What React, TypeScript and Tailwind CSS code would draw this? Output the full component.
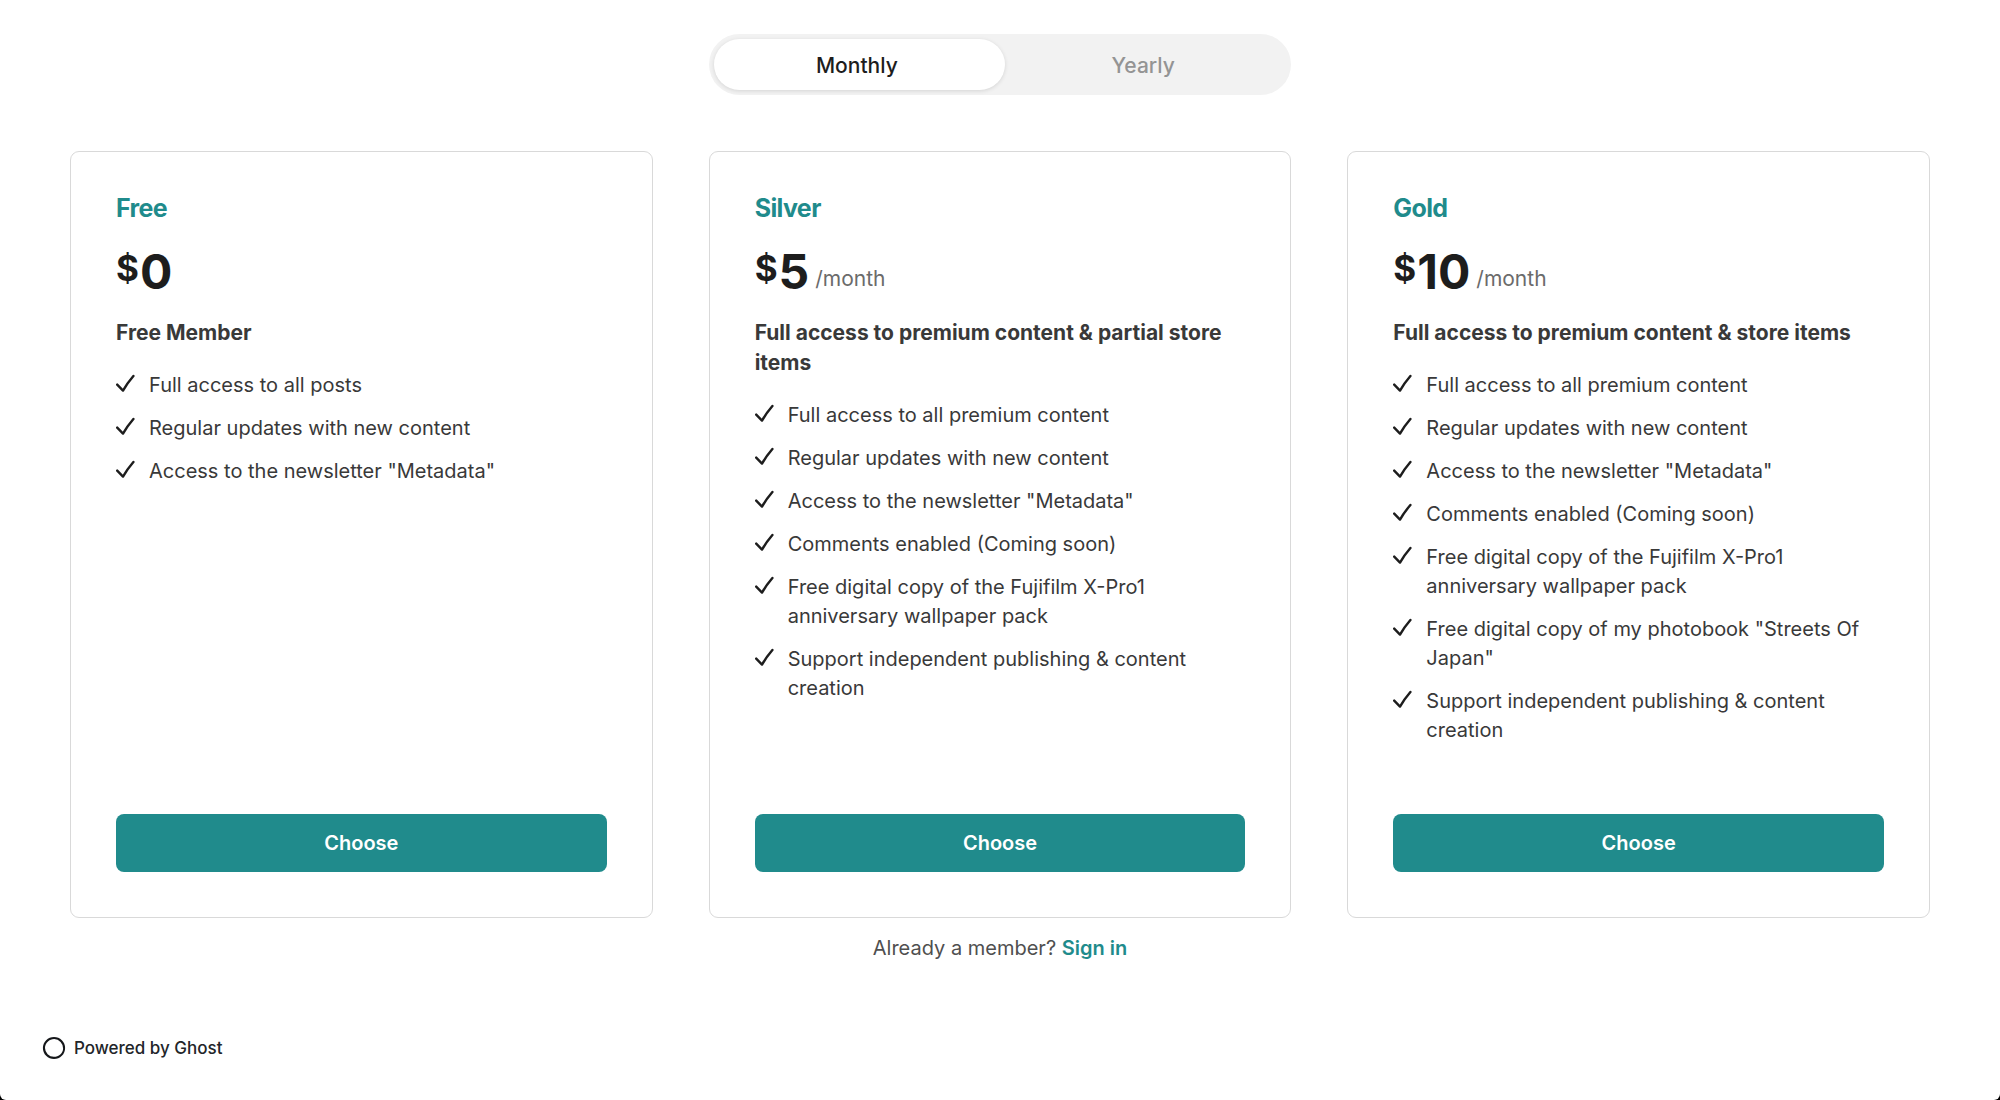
import { useState } from "react";

type Plan = {
  name: string;
  monthly: number;
  yearly: number;
  description: string;
  benefits: string[];
};

const plans: Plan[] = [
  {
    name: "Free",
    monthly: 0,
    yearly: 0,
    description: "Free Member",
    benefits: [
      "Full access to all posts",
      "Regular updates with new content",
      'Access to the newsletter "Metadata"',
    ],
  },
  {
    name: "Silver",
    monthly: 5,
    yearly: 50,
    description: "Full access to premium content & partial store items",
    benefits: [
      "Full access to all premium content",
      "Regular updates with new content",
      'Access to the newsletter "Metadata"',
      "Comments enabled (Coming soon)",
      "Free digital copy of the Fujifilm X-Pro1 anniversary wallpaper pack",
      "Support independent publishing & content creation",
    ],
  },
  {
    name: "Gold",
    monthly: 10,
    yearly: 100,
    description: "Full access to premium content & store items",
    benefits: [
      "Full access to all premium content",
      "Regular updates with new content",
      'Access to the newsletter "Metadata"',
      "Comments enabled (Coming soon)",
      "Free digital copy of the Fujifilm X-Pro1 anniversary wallpaper pack",
      'Free digital copy of my photobook "Streets Of Japan"',
      "Support independent publishing & content creation",
    ],
  },
];

function CheckIcon() {
  return (
    <svg
      viewBox="0 0 20 20"
      className="mt-[3px] size-5 shrink-0"
      fill="none"
      stroke="#1d1d1d"
      strokeWidth="2.4"
      strokeLinecap="round"
      strokeLinejoin="round"
      aria-hidden="true"
    >
      <path d="M1.2 10.6 L7 16.600 Q11 9.500 17.400 2" />
    </svg>
  );
}

function PlanCard({ plan, yearly }: { plan: Plan; yearly: boolean }) {
  const amount = yearly ? plan.yearly : plan.monthly;
  return (
    <section className="flex flex-col rounded-[9px] border border-[#d9d9d9] px-[45px] pt-10 pb-[45px]">
      <h2 className="text-[25px] leading-8 font-bold tracking-tight text-[#1f8b8c]">{plan.name}</h2>
      <div className="mt-6 flex items-start text-[#1d1d1d]">
        <span className="text-[35px] leading-10 font-bold">$</span>
        <span className="ml-px text-5xl leading-12 font-bold">{amount}</span>
        {amount > 0 && (
          <span className="ml-1.5 self-end text-[21px] leading-[34px] text-[#6b6b6b]">
            {yearly ? "/year" : "/month"}
          </span>
        )}
      </div>
      <p className="mt-[22px] text-[21px] leading-[30px] font-bold text-[#393939]">{plan.description}</p>
      <ul className="mt-[23px] flex flex-col gap-3.5">
        {plan.benefits.map((benefit) => (
          <li key={benefit} className="flex items-start gap-[13px] text-xl leading-[29px] text-[#393939]">
            <CheckIcon />
            <span>{benefit}</span>
          </li>
        ))}
      </ul>
      <div className="mt-auto pt-[69px]">
        <button
          type="button"
          className="h-[58px] w-full rounded-lg bg-[#208b8c] text-xl font-semibold text-white"
        >
          Choose
        </button>
      </div>
    </section>
  );
}

export default function App() {
  const [yearly, setYearly] = useState(false);

  return (
    <div className="bg-black font-[Inter,sans-serif]">
      <main className="flex min-h-screen flex-col rounded-b-md bg-white px-[70px] pt-[34px]">
        <div className="grid grid-cols-3 gap-14">
          <div className="relative col-start-2 flex rounded-full bg-[#f2f2f2] p-[5px]">
            <span
              className={`absolute inset-y-[5px] w-1/2 rounded-full bg-white shadow-[0_1px_4px_rgba(0,0,0,0.12)] ${
                yearly ? "right-[5px]" : "left-[5px]"
              }`}
            />
            <button
              type="button"
              aria-pressed={!yearly}
              onClick={() => setYearly(false)}
              className={`relative h-[51px] flex-1 rounded-full pt-0.5 text-[21px] font-medium ${
                yearly ? "text-[#949494]" : "text-[#1d1d1d]"
              }`}
            >
              Monthly
            </button>
            <button
              type="button"
              aria-pressed={yearly}
              onClick={() => setYearly(true)}
              className={`relative h-[51px] flex-1 rounded-full pt-0.5 text-[21px] font-medium ${
                yearly ? "text-[#1d1d1d]" : "text-[#949494]"
              }`}
            >
              Yearly
            </button>
          </div>
        </div>

        <div className="mt-14 grid grid-cols-3 gap-14">
          {plans.map((plan) => (
            <PlanCard key={plan.name} plan={plan} yearly={yearly} />
          ))}
        </div>

        <p className="mt-4 text-center text-xl leading-7 text-[#4f4f4f]">
          Already a member?{" "}
          <a href="#signin" className="font-semibold text-[#1f8b8c]">
            Sign in
          </a>
        </p>

        <footer className="-mx-7 mt-auto flex pb-10">
          <a href="#ghost" className="flex items-center gap-2 text-[17px] leading-6 font-medium text-[#222529]">
            <svg viewBox="0 0 24 24" className="size-6" fill="#15171a" fillRule="evenodd" aria-hidden="true">
              <path d="M12 0.900a11.100 11.100 0 1 0 0 22.200a11.100 11.100 0 0 0 0-22.200ZM12.200 3a9.300 9.300 0 0 1 8.900 9.400c0 4.700-4.400 8.400-9.200 8.400A8.800 8.800 0 0 1 3 12.100C3 7.200 7.300 3 12.200 3Z" />
            </svg>
            Powered by Ghost
          </a>
        </footer>
      </main>
    </div>
  );
}
